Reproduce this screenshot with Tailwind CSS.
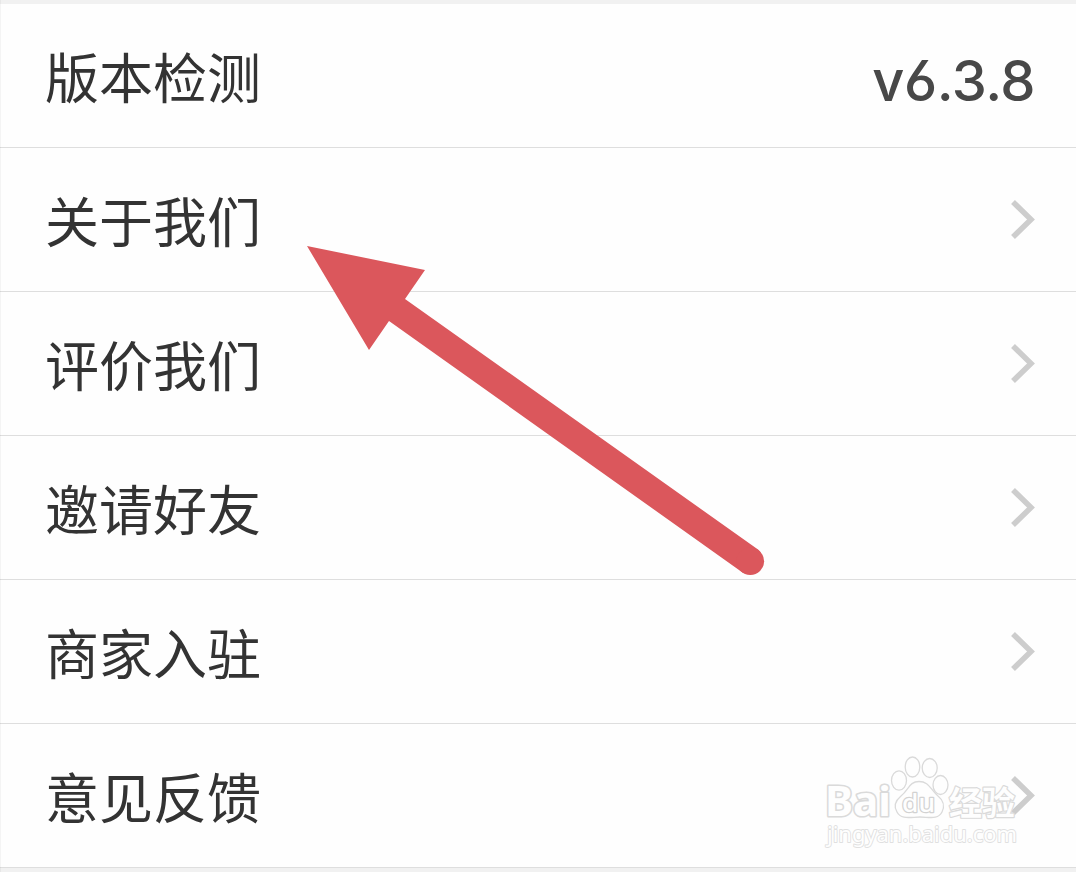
<!DOCTYPE html>
<html lang="zh-CN">

<head>
  <meta charset="UTF-8">
  <meta name="viewport" content="width=device-width, initial-scale=1.0">
  <title>关于</title>
  <script src="https://cdn.jsdelivr.net/npm/@tailwindcss/browser@4"></script>
</head>

<body class="bg-[#f1f1f1] font-['Noto_Sans_CJK_SC',sans-serif] text-[#333333]">

  <div class="relative w-[1076px] h-[872px] overflow-hidden pt-1">

    <!-- Settings list -->
    <ul class="bg-[#fefefe] text-[54px] leading-none">
      <li class="h-36 pl-[45px] pr-[41px] flex items-center justify-between border-b border-[#dedede]">
        <span class="pt-px">版本检测</span>
        <span class="font-['Inter',sans-serif] font-medium text-[56px] tracking-[-0.5px] text-[#484848] pt-2.5 [font-feature-settings:'cv03']">v6.3.8</span>
      </li>
      <li class="h-36 pl-[45px] pr-[41px] flex items-center justify-between border-b border-[#dedede]">
        <span class="pt-px">关于我们</span>
        <svg class="w-6 h-10" viewBox="0 0 24 40" fill="none" stroke="#cdcdcd" stroke-width="5.500">
          <path d="M2 2L20 19.500L2 37" />
        </svg>
      </li>
      <li class="h-36 pl-[45px] pr-[41px] flex items-center justify-between border-b border-[#dedede]">
        <span class="pt-px">评价我们</span>
        <svg class="w-6 h-10" viewBox="0 0 24 40" fill="none" stroke="#cdcdcd" stroke-width="5.500">
          <path d="M2 2L20 19.500L2 37" />
        </svg>
      </li>
      <li class="h-36 pl-[45px] pr-[41px] flex items-center justify-between border-b border-[#dedede]">
        <span class="pt-px">邀请好友</span>
        <svg class="w-6 h-10" viewBox="0 0 24 40" fill="none" stroke="#cdcdcd" stroke-width="5.500">
          <path d="M2 2L20 19.500L2 37" />
        </svg>
      </li>
      <li class="h-36 pl-[45px] pr-[41px] flex items-center justify-between border-b border-[#dedede]">
        <span class="pt-px">商家入驻</span>
        <svg class="w-6 h-10" viewBox="0 0 24 40" fill="none" stroke="#cdcdcd" stroke-width="5.500">
          <path d="M2 2L20 19.500L2 37" />
        </svg>
      </li>
      <li class="h-36 pl-[45px] pr-[41px] flex items-center justify-between border-b border-[#dedede]">
        <span class="pt-px">意见反馈</span>
        <svg class="w-6 h-10" viewBox="0 0 24 40" fill="none" stroke="#cdcdcd" stroke-width="5.500">
          <path d="M2 2L20 19.500L2 37" />
        </svg>
      </li>
    </ul>

    <!-- Faint left edge of the list -->
    <div class="absolute left-0 top-0 w-px h-full bg-black/4"></div>

    <!-- Pointer arrow over the list -->
    <svg class="absolute left-[300px] top-[240px] w-[480px] h-[345px]" viewBox="300 240 480 345" fill="#db575c">
      <path d="M307 246L425 270L405 299L758 549.500A14 14 0 0 1 742.500 572.500L389 321L369 350Z" />
      <circle cx="750.300" cy="561.300" r="13.800" />
    </svg>

    <!-- Watermark -->
    <svg class="absolute left-[816px] top-[750px] w-[210px] h-[105px]" viewBox="816 750 210 105" fill="#fefefe" stroke="#dadada" stroke-width="1.3" stroke-linejoin="round">
      <text x="825" y="816" font-size="42" textLength="66" stroke-width="3.200" paint-order="stroke" lengthAdjust="spacingAndGlyphs" class="font-['Noto_Sans',sans-serif] font-bold">Bai</text>
      <ellipse cx="899" cy="780.500" rx="7.500" ry="9.700" />
      <ellipse cx="912.500" cy="767" rx="7.300" ry="10" />
      <ellipse cx="929.700" cy="768" rx="7.500" ry="9.500" />
      <ellipse cx="940.500" cy="785" rx="7.500" ry="9.500" />
      <path d="M919 781.500C909 781.500 909 790 901 796C895 801 894 807 897 812C901 820 911 817 920 817C929 817 938 820 942 812C945 806 943 800 938 796C930 789 929 781.500 919 781.500Z" />
      <text x="902" y="812" font-size="25" textLength="33" stroke-width="2.400" stroke="#d2d2d2" paint-order="stroke" lengthAdjust="spacingAndGlyphs" class="font-['Noto_Sans',sans-serif] font-medium">du</text>
      <text x="949" y="815" font-size="33" textLength="66" stroke-width="2.400" paint-order="stroke" class="font-['Noto_Sans_CJK_SC',sans-serif] font-bold">经验</text>
      <text x="827" y="842" font-size="22" textLength="190" stroke-width="1.800" stroke="#e0e0e0" paint-order="stroke" lengthAdjust="spacingAndGlyphs" class="font-['Noto_Sans',sans-serif]">jingyan.baidu.com</text>
    </svg>
  </div>

</body>

</html>
